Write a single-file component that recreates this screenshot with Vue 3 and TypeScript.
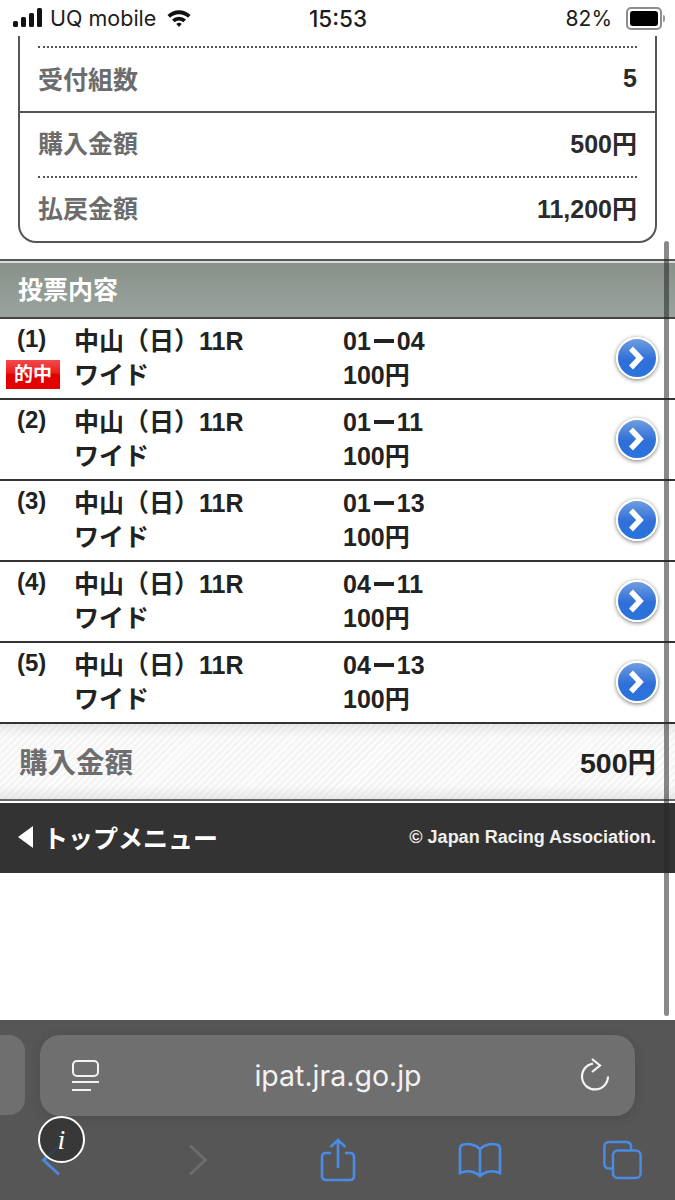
<script setup lang="ts">
const summaryTop = { label: '受付組数', value: '5' };
const summaryBottom = [
  { label: '購入金額', value: '500円' },
  { label: '払戻金額', value: '11,200円' },
];
const bets = [
  { no: '(1)', race: '中山（日）11R', kind: 'ワイド', pair: ['01', '04'], amount: '100円', hit: true },
  { no: '(2)', race: '中山（日）11R', kind: 'ワイド', pair: ['01', '11'], amount: '100円', hit: false },
  { no: '(3)', race: '中山（日）11R', kind: 'ワイド', pair: ['01', '13'], amount: '100円', hit: false },
  { no: '(4)', race: '中山（日）11R', kind: 'ワイド', pair: ['04', '11'], amount: '100円', hit: false },
  { no: '(5)', race: '中山（日）11R', kind: 'ワイド', pair: ['04', '13'], amount: '100円', hit: false },
];
</script>

<template>
  <div class="screen">
    <div class="status">
      <div class="status-left">
        <svg class="signal" width="30" height="20" viewBox="0 0 30 20">
          <rect x="0" y="13" width="5" height="6" rx="1.5" />
          <rect x="8" y="9" width="5" height="10" rx="1.5" />
          <rect x="16" y="5" width="5" height="14" rx="1.5" />
          <rect x="24" y="0" width="5" height="19" rx="1.5" />
        </svg>
        <span class="carrier">UQ mobile</span>
        <svg class="wifi" width="26" height="20" viewBox="0 0 24 20">
          <path d="M0.5 7 A16.5 16.5 0 0 1 23.5 7 L21 9.8 A13 13 0 0 0 3 9.8 Z" />
          <path d="M5 11.6 A10 10 0 0 1 19 11.6 L16.4 14.3 A6.4 6.4 0 0 0 7.6 14.3 Z" />
          <path d="M9.3 16 A4 4 0 0 1 14.7 16 L12 19 Z" />
        </svg>
      </div>
      <div class="status-time">15:53</div>
      <div class="status-right">
        <span>82%</span>
        <div class="battery"><div class="battery-fill"></div></div>
        <div class="battery-tip"></div>
      </div>
    </div>

    <div class="summary">
      <div class="summary-block first">
        <div class="dots"></div>
        <div class="summary-row">
          <span class="summary-label">{{ summaryTop.label }}</span>
          <span class="summary-value">{{ summaryTop.value }}</span>
        </div>
      </div>
      <div class="summary-block second">
        <template v-for="(row, i) in summaryBottom" :key="row.label">
          <div v-if="i > 0" class="dots"></div>
          <div class="summary-row">
            <span class="summary-label">{{ row.label }}</span>
            <span class="summary-value">{{ row.value }}</span>
          </div>
        </template>
      </div>
    </div>

    <div class="section-head">投票内容</div>

    <div v-for="bet in bets" :key="bet.no" class="bet">
      <div class="bet-no">
        <span>{{ bet.no }}</span>
        <span v-if="bet.hit" class="hit">的中</span>
      </div>
      <div class="bet-race">
        <div>{{ bet.race }}</div>
        <div>{{ bet.kind }}</div>
      </div>
      <div class="bet-pair">
        <div class="pair-line">{{ bet.pair[0] }}<i class="dash"></i>{{ bet.pair[1] }}</div>
        <div>{{ bet.amount }}</div>
      </div>
      <div class="go">
        <svg width="24" height="24" viewBox="0 0 24 24">
          <path d="M6 2.5 L15 12 L6 21.5" fill="none" stroke="#fff" stroke-width="5.5" />
        </svg>
      </div>
    </div>

    <div class="total">
      <span class="total-label">購入金額</span>
      <span class="total-value">500円</span>
    </div>

    <div class="menu">
      <div class="menu-back">
        <span class="back-arrow"></span>
        <span>トップメニュー</span>
      </div>
      <div class="copyright">© Japan Racing Association.</div>
    </div>

    <div class="spacer"></div>

    <div class="browser">
      <div class="url-row">
        <div class="prev-tab"></div>
        <div class="url-bar">
          <svg width="30" height="34" viewBox="0 0 30 34" fill="none" stroke="#f2f2f2" stroke-width="2">
            <rect x="2" y="2" width="25" height="15" rx="4" />
            <path d="M1 23 H28 M1 31 H20" />
          </svg>
          <span class="url-text">ipat.jra.go.jp</span>
          <svg width="30" height="36" viewBox="0 0 30 36" fill="none" stroke="#f6f6f6" stroke-width="2.2">
            <path d="M28 18.5 A13 13 0 1 1 13 5.6" />
            <path d="M12 1 L20 7.5 L12 14" />
          </svg>
        </div>
      </div>
      <div class="tools">
        <svg class="tool back" width="20" height="32" viewBox="0 0 20 32" fill="none" stroke="#4d86dc" stroke-width="3">
          <path d="M18 1.5 L2.5 16 L18 30.5" />
        </svg>
        <svg class="tool fwd" width="20" height="32" viewBox="0 0 20 32" fill="none" stroke="#6c6c6c" stroke-width="3">
          <path d="M2 1.5 L17.5 16 L2 30.5" />
        </svg>
        <svg class="tool share" width="36" height="44" viewBox="0 0 36 44" fill="none" stroke="#4a8be6" stroke-width="2.6">
          <path d="M11 15 H6 Q2 15 2 19 V38 Q2 42 6 42 H30 Q34 42 34 38 V19 Q34 15 30 15 H25" />
          <path d="M18 30 V2 M10.5 9 L18 2 L25.5 9" />
        </svg>
        <svg class="tool book" width="44" height="36" viewBox="0 0 44 36" fill="none" stroke="#4a8be6" stroke-width="2.6">
          <path d="M22 7 C17 2 9 1 4 3 Q2 4 2 7 L2 31 C9 28 17 29 22 34 C27 29 35 28 42 31 L42 7 Q42 4 40 3 C35 1 27 2 22 7 Z" />
          <path d="M22 7 V34" />
        </svg>
        <svg class="tool tabs" width="41" height="40" viewBox="0 0 42 42" fill="none" stroke="#4a8be6" stroke-width="2.6">
          <path d="M11 30 H7 Q2 30 2 25 V7 Q2 2 7 2 H25 Q30 2 30 7 V10" />
          <rect x="11" y="11" width="29" height="29" rx="5" />
        </svg>
      </div>
    </div>

    <div class="scrollbar"></div>
    <div class="info"><i>i</i></div>
  </div>
</template>

<style>
html,
body {
  margin: 0;
  background: #fff;
}
</style>

<style scoped>
.screen {
  position: relative;
  width: 675px;
  height: 1200px;
  overflow: hidden;
  display: flex;
  flex-direction: column;
  background: #fff;
  color: #222;
  font-family: 'Liberation Sans', 'Noto Sans CJK JP', sans-serif;
  font-weight: 700;
}
.status {
  height: 36px;
  flex: none;
  display: flex;
  align-items: center;
  justify-content: space-between;
  padding: 0 10px 0 13px;
  font-family: Inter, 'Liberation Sans', sans-serif;
  font-weight: 400;
  font-size: 21px;
  color: #1c1c1c;
  position: relative;
}
.status-left {
  display: flex;
  align-items: center;
  gap: 7px;
}
.carrier {
  font-size: 21.5px;
}
.signal {
  fill: #111;
}
.wifi {
  fill: #111;
  margin-left: 3px;
}
.status-time {
  position: absolute;
  left: 309px;
  top: 5px;
  font-weight: 500;
  font-size: 22.5px;
}
.status-right {
  display: flex;
  align-items: center;
}
.battery {
  width: 28px;
  height: 15px;
  margin-left: 14px;
  border: 2px solid #8d8d8d;
  border-radius: 5px;
  padding: 2px;
  box-sizing: content-box;
}
.battery-fill {
  width: 28px;
  height: 15px;
  background: #000;
  border-radius: 3px;
}
.battery-tip {
  width: 2px;
  height: 7px;
  margin-left: 1px;
  background: #999;
  border-radius: 0 2px 2px 0;
}
.summary {
  flex: none;
  margin: 0 18px;
  height: 207px;
  box-sizing: border-box;
  border: 2px solid #555;
  border-top: 0;
  border-radius: 0 0 18px 18px;
}
.summary-block {
  padding: 0 18px;
}
.summary-block.first {
  height: 77px;
  padding-top: 10px;
  box-sizing: border-box;
  border-bottom: 2px solid #555;
}
.dots {
  height: 0;
  border-top: 2px dotted #555;
}
.summary-row {
  display: flex;
  justify-content: space-between;
  align-items: center;
  height: 63px;
  box-sizing: border-box;
  padding-bottom: 3px;
  font-size: 25px;
}
.summary-block.second .summary-row {
  padding-bottom: 5px;
}
.summary-label {
  color: #6c6c6c;
}
.summary-value {
  color: #2b2b2b;
}
.section-head {
  flex: none;
  margin-top: 16px;
  height: 60px;
  box-sizing: border-box;
  padding: 0 0 2px 18px;
  display: flex;
  align-items: center;
  color: #fff;
  font-size: 25px;
  background: linear-gradient(#889089, #9aa39e);
  box-shadow: inset 0 2px 0 #d8dcd9;
  border-top: 2px solid #555;
  border-bottom: 2px solid #444;
}
.bet {
  flex: none;
  height: 79px;
  display: flex;
  align-items: flex-start;
  border-bottom: 2px solid #333;
  font-size: 25px;
  line-height: 34px;
  position: relative;
}
.bet-no {
  width: 74px;
  flex: none;
  box-sizing: border-box;
  padding: 3px 0 0 17px;
  font-size: 24px;
  line-height: 33px;
  display: flex;
  flex-direction: column;
  align-items: flex-start;
}
.hit {
  margin: 5px 0 0 -11px;
  width: 54px;
  height: 29px;
  text-align: center;
  font-size: 19px;
  line-height: 29px;
  color: #fff;
  background: linear-gradient(#f44a4a 0, #ec1c1c 45%, #e20000 50%, #e60000 100%);
}
.bet-race {
  width: 269px;
  flex: none;
  padding-top: 5px;
}
.bet-pair {
  padding-top: 5px;
  flex: 1;
}
.pair-line {
  display: flex;
  align-items: center;
}
.dash {
  display: inline-block;
  width: 20px;
  height: 4px;
  margin: 0 3px;
  background: #222;
}
.go {
  position: absolute;
  right: 17px;
  top: 18px;
  width: 38px;
  height: 38px;
  border: 2px solid #fff;
  border-radius: 50%;
  display: flex;
  align-items: center;
  justify-content: center;
  background: linear-gradient(#6f9de0, #2f6fd8 55%, #2a74de);
  box-shadow: 0 1px 4px rgba(0, 0, 0, 0.55);
}
.total {
  flex: none;
  height: 77px;
  box-sizing: border-box;
  padding: 0 19px 2px;
  display: flex;
  align-items: center;
  justify-content: space-between;
  font-size: 28.5px;
  background:
    repeating-linear-gradient(135deg, rgba(0, 0, 0, 0.03) 0 2px, transparent 2px 5px),
    linear-gradient(#e9e9e9, #fbfbfb 18%, #fbfbfb 82%, #e9e9e9);
  border-bottom: 2px solid #666;
}
.total-label {
  color: #6e6e6e;
}
.menu {
  flex: none;
  margin-top: 2px;
  height: 70px;
  box-sizing: border-box;
  padding: 0 19px 2px 18px;
  background: #333;
  color: #fff;
  display: flex;
  align-items: center;
  justify-content: space-between;
}
.menu-back {
  display: flex;
  align-items: center;
  gap: 10px;
  font-size: 25px;
}
.back-arrow {
  width: 0;
  height: 0;
  border-top: 11px solid transparent;
  border-bottom: 11px solid transparent;
  border-right: 15px solid #fff;
}
.copyright {
  font-size: 18px;
  color: #f0f0f0;
}
.spacer {
  flex: 1;
}
.browser {
  flex: none;
  height: 180px;
  background: #565656;
  font-weight: 400;
}
.url-row {
  display: flex;
  align-items: flex-start;
  gap: 15px;
  padding-top: 15px;
}
.prev-tab {
  width: 25px;
  height: 80px;
  background: #6f6f6f;
  border-radius: 0 16px 16px 0;
}
.url-bar {
  width: 595px;
  height: 81px;
  box-sizing: border-box;
  padding: 0 25px 0 31px;
  background: #6f6f6f;
  border-radius: 20px;
  display: flex;
  align-items: center;
  justify-content: space-between;
  box-shadow: 0 2px 12px rgba(0, 0, 0, 0.12);
}
.url-text {
  font-family: Inter, 'Liberation Sans', sans-serif;
  font-size: 28.5px;
  color: #f2f2f2;
  margin-right: 5px;
}
.tools {
  display: flex;
  align-items: center;
  padding: 22px 0 0 41px;
}
.tool.fwd {
  margin-left: 127px;
}
.tool.share {
  margin-left: 112px;
}
.tool.book {
  margin-left: 102px;
}
.tool.tabs {
  margin-left: 100px;
}
.scrollbar {
  position: absolute;
  right: 6px;
  top: 241px;
  width: 5px;
  height: 775px;
  border-radius: 3px;
  background: rgba(40, 40, 40, 0.55);
}
.info {
  position: absolute;
  left: 38px;
  top: 1116px;
  width: 43px;
  height: 43px;
  border: 2px solid #fff;
  border-radius: 50%;
  background: rgba(50, 50, 50, 0.85);
  color: #fff;
  display: flex;
  align-items: center;
  justify-content: center;
  font-family: 'Liberation Serif', serif;
  font-weight: 400;
  font-size: 28px;
}
</style>
